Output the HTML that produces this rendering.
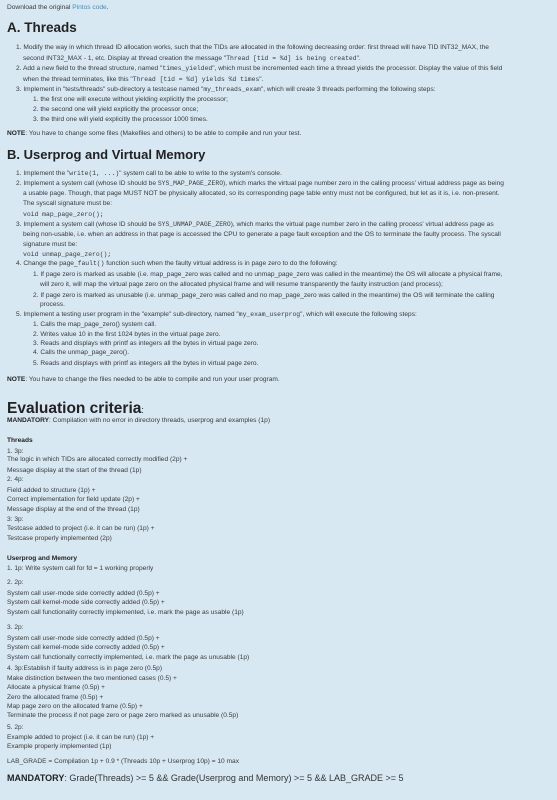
<!DOCTYPE html>
<html><head><meta charset="utf-8"><style>
body{margin:0;width:557px;height:800px;background:#d8e8f2;font-family:"Liberation Sans",sans-serif;color:#3a3a3a;position:relative;overflow:hidden}
.l{position:absolute;white-space:nowrap;font-size:6.6px;line-height:10px}
.c{font-family:"Liberation Mono",monospace;font-size:6.4px}
.h{position:absolute;white-space:nowrap;font-weight:bold;color:#222}
b{color:#222}
a{color:#3d8fc0;text-decoration:none}
</style></head><body>
<div class="l" style="left:7px;top:3px">Download the original <a>Pintos code</a>.</div>
<div class="h" style="left:7px;top:20px;font-size:13.5px">A. Threads</div>
<div class="l" style="left:16px;top:43px">1. Modify the way in which thread ID allocation works, such that the TIDs are allocated in the following decreasing order: first thread will have TID INT32_MAX, the</div>
<div class="l" style="left:23px;top:54px">second INT32_MAX - 1, etc. Display at thread creation the message "<span class="c">Thread [tid = %d] is being created</span>".</div>
<div class="l" style="left:16px;top:64px">2. Add a new field to the thread structure, named "<span class="c">times_yielded</span>", which must be incremented each time a thread yields the processor. Display the value of this field</div>
<div class="l" style="left:23px;top:75px">when the thread terminates, like this "<span class="c">Thread [tid = %d] yields %d times</span>".</div>
<div class="l" style="left:16px;top:85px">3. Implement in "tests/threads" sub-directory a testcase named "<span class="c">my_threads_exam</span>", which will create 3 threads performing the following steps:</div>
<div class="l" style="left:33px;top:95px">1. the first one will execute without yielding explicitly the processor;</div>
<div class="l" style="left:33px;top:105px">2. the second one will yield explicitly the processor once;</div>
<div class="l" style="left:33px;top:115px">3. the third one will yield explicitly the processor 1000 times.</div>
<div class="l" style="left:7px;top:129px"><b>NOTE</b>: You have to change some files (Makefiles and others) to be able to compile and run your test.</div>
<div class="h" style="left:7px;top:147px;font-size:13px">B. Userprog and Virtual Memory</div>
<div class="l" style="left:16px;top:169px">1. Implement the "<span class="c">write(1, ...)</span>" system call to be able to write to the system's console.</div>
<div class="l" style="left:16px;top:179px">2. Implement a system call (whose ID should be <span class="c">SYS_MAP_PAGE_ZERO</span>), which marks the virtual page number zero in the calling process' virtual address page as being</div>
<div class="l" style="left:23px;top:189px">a usable page. Though, that page MUST NOT be physically allocated, so its corresponding page table entry must not be configured, but let as it is, i.e. non-present.</div>
<div class="l" style="left:23px;top:199px">The syscall signature must be:</div>
<div class="l c" style="left:23px;top:210px">void map_page_zero();</div>
<div class="l" style="left:16px;top:220px">3. Implement a system call (whose ID should be <span class="c">SYS_UNMAP_PAGE_ZERO</span>), which marks the virtual page number zero in the calling process' virtual address page as</div>
<div class="l" style="left:23px;top:230px">being non-usable, i.e. when an address in that page is accessed the CPU to generate a page fault exception and the OS to terminate the faulty process. The syscall</div>
<div class="l" style="left:23px;top:240px">signature must be:</div>
<div class="l c" style="left:23px;top:250px">void unmap_page_zero();</div>
<div class="l" style="left:16px;top:259px">4. Change the page_<span class="c">fault()</span> function such when the faulty virtual address is in page zero to do the following:</div>
<div class="l" style="left:33px;top:270px">1. If page zero is marked as usable (i.e. map_page_zero was called and no unmap_page_zero was called in the meantime) the OS will allocate a physical frame,</div>
<div class="l" style="left:40px;top:280px">will zero it, will map the virtual page zero on the allocated physical frame and will resume transparently the faulty instruction (and process);</div>
<div class="l" style="left:33px;top:291px">2. If page zero is marked as unusable (i.e. unmap_page_zero was called and no map_page_zero was called in the meantime) the OS will terminate the calling</div>
<div class="l" style="left:40px;top:300px">process.</div>
<div class="l" style="left:16px;top:310px">5. Implement a testing user program in the "example" sub-directory, named "<span class="c">my_exam_userprog</span>", which will execute the following steps:</div>
<div class="l" style="left:33px;top:320px">1. Calls the map_page_zero() system call.</div>
<div class="l" style="left:33px;top:330px">2. Writes value 10 in the first 1024 bytes in the virtual page zero.</div>
<div class="l" style="left:33px;top:339px">3. Reads and displays with printf as integers all the bytes in virtual page zero.</div>
<div class="l" style="left:33px;top:348px">4. Calls the unmap_page_zero().</div>
<div class="l" style="left:33px;top:359px">5. Reads and displays with printf as integers all the bytes in virtual page zero.</div>
<div class="l" style="left:7px;top:375px"><b>NOTE</b>: You have to change the files needed to be able to compile and run your user program.</div>
<div class="h" style="left:7px;top:400px;font-size:15.5px;color:#222">Evaluation criteria<span style="font-size:9px;font-weight:normal">:</span></div>
<div class="l" style="left:7px;top:416px"><b>MANDATORY</b>: Compilation with no error in directory threads, userprog and examples (1p)</div>
<div class="l" style="left:7px;top:436px"><b>Threads</b></div>
<div class="l" style="left:7px;top:447px">1. 3p:</div>
<div class="l" style="left:7px;top:455px">The logic in which TIDs are allocated correctly modified (2p) +</div>
<div class="l" style="left:7px;top:466px">Message display at the start of the thread (1p)</div>
<div class="l" style="left:7px;top:475px">2. 4p:</div>
<div class="l" style="left:7px;top:486px">Field added to structure (1p) +</div>
<div class="l" style="left:7px;top:495px">Correct implementation for field update (2p) +</div>
<div class="l" style="left:7px;top:505px">Message display at the end of the thread (1p)</div>
<div class="l" style="left:7px;top:515px">3: 3p:</div>
<div class="l" style="left:7px;top:524px">Testcase added to project (i.e. it can be run) (1p) +</div>
<div class="l" style="left:7px;top:534px">Testcase properly implemented (2p)</div>
<div class="l" style="left:7px;top:554px"><b>Userprog and Memory</b></div>
<div class="l" style="left:7px;top:564px">1. 1p: Write system call for fd = 1 working properly</div>
<div class="l" style="left:7px;top:578px">2. 2p:</div>
<div class="l" style="left:7px;top:589px">System call user-mode side correctly added (0.5p) +</div>
<div class="l" style="left:7px;top:598px">System call kernel-mode side correctly added (0.5p) +</div>
<div class="l" style="left:7px;top:608px">System call functionality correctly implemented, i.e. mark the page as usable (1p)</div>
<div class="l" style="left:7px;top:623px">3. 2p:</div>
<div class="l" style="left:7px;top:634px">System call user-mode side correctly added (0.5p) +</div>
<div class="l" style="left:7px;top:643px">System call kernel-mode side correctly added (0.5p) +</div>
<div class="l" style="left:7px;top:653px">System call functionally correctly implemented, i.e. mark the page as unusable (1p)</div>
<div class="l" style="left:7px;top:664px">4. 3p:Establish if faulty address is in page zero (0.5p)</div>
<div class="l" style="left:7px;top:674px">Make distinction between the two mentioned cases (0.5) +</div>
<div class="l" style="left:7px;top:683px">Allocate a physical frame (0.5p) +</div>
<div class="l" style="left:7px;top:693px">Zero the allocated frame (0.5p) +</div>
<div class="l" style="left:7px;top:702px">Map page zero on the allocated frame (0.5p) +</div>
<div class="l" style="left:7px;top:711px">Terminate the process if not page zero or page zero marked as unusable (0.5p)</div>
<div class="l" style="left:7px;top:723px">5. 2p:</div>
<div class="l" style="left:7px;top:733px">Example added to project (i.e. it can be run) (1p) +</div>
<div class="l" style="left:7px;top:742px">Example properly implemented (1p)</div>
<div class="l" style="left:7px;top:757px">LAB_GRADE = Compilation 1p + 0.9 * (Threads 10p + Userprog 10p) = 10 max</div>
<div class="l" style="left:7px;top:771px;font-size:9px;line-height:14px;color:#333"><b>MANDATORY</b>: Grade(Threads) &gt;= 5 &amp;&amp; Grade(Userprog and Memory) &gt;= 5 &amp;&amp; LAB_GRADE &gt;= 5</div>
</body></html>
